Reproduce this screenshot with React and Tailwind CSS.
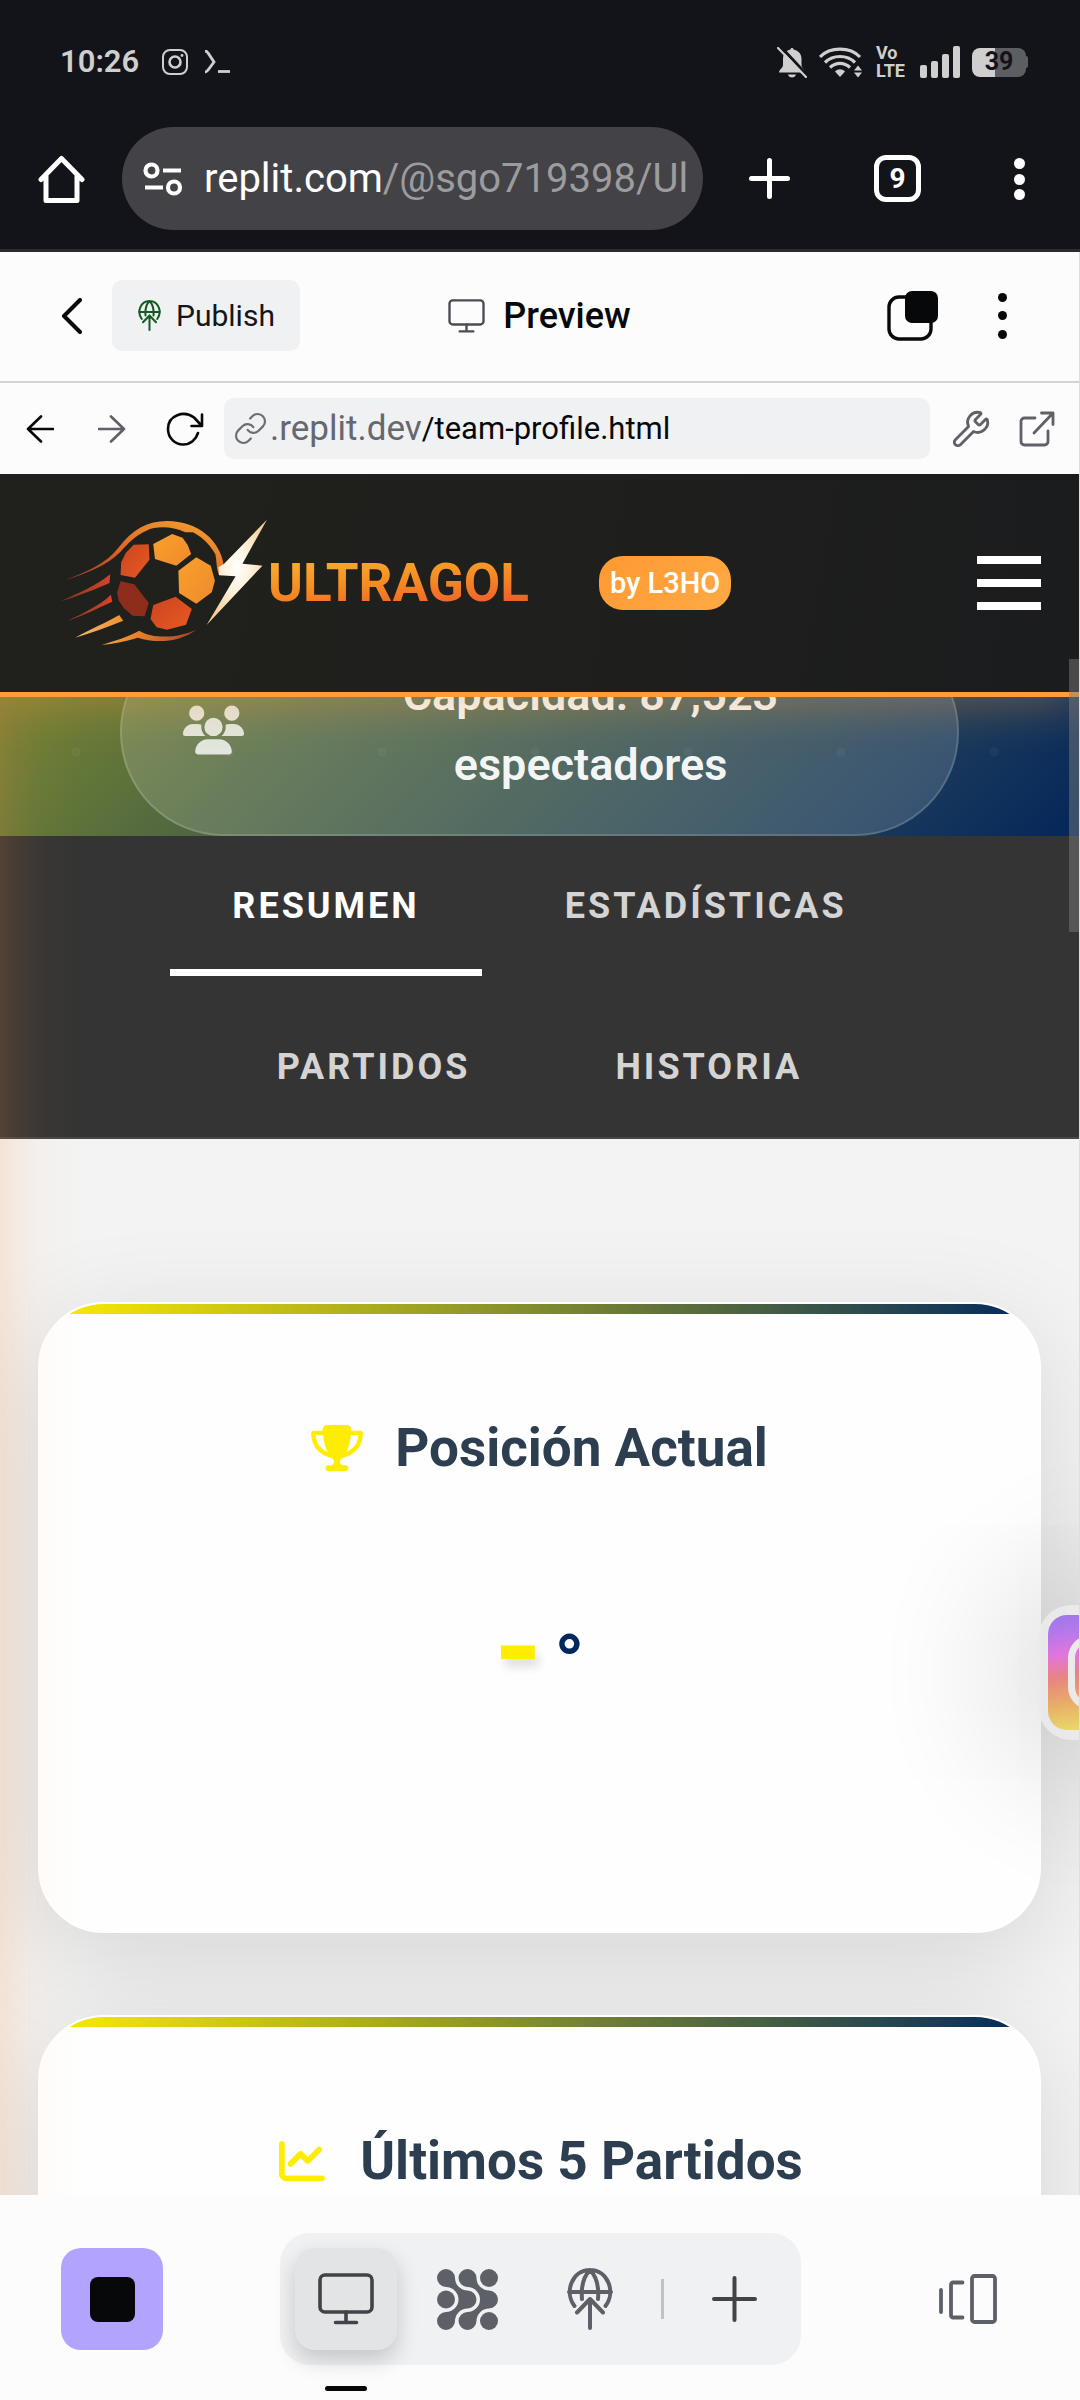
import React from "react";
import { Wrench, Link } from "lucide-react";
import { FaUsers, FaTrophy, FaChartLine } from "react-icons/fa6";

function StatusBar() {
  return (
    <div className="flex h-[124px] items-center justify-between pl-[60px] pr-[52px] text-[#cfcfcf]">
      <div className="flex items-center">
        <span className="text-[31px] leading-10 font-semibold">10:26</span>
        <svg className="ml-[23px]" width="26" height="26" viewBox="0 0 26 26" fill="none" stroke="currentColor" aria-hidden="true">
          <rect x="1" y="1" width="24" height="24" rx="7" strokeWidth="2" />
          <circle cx="13" cy="13" r="5.5" strokeWidth="2.6" />
          <circle cx="20" cy="6.5" r="1.4" fill="currentColor" stroke="none" />
        </svg>
        <svg className="ml-4" width="26" height="24" viewBox="0 0 26 24" fill="none" stroke="currentColor" strokeWidth="2.8" aria-hidden="true">
          <path d="M1 1c2 0 2 1 3 2l6 9-6 8c-1 1-1 2-3 2" />
          <path d="M14 21.5h12" />
        </svg>
      </div>
      <div className="flex items-center">
        <svg width="30" height="31" viewBox="0 0 30 31" fill="currentColor" aria-hidden="true">
          <path d="M15 1c1 0 1.500.600 1.500 1.500C21.500 3.500 24.500 7 24.500 12v6c0 3 3.500 4.500 3.500 7.500H2c0-3 4-4.500 4-7.500v-6c0-5 3-8.500 7.500-9.500C13.500 1.600 14 1 15 1z" />
          <path d="M11 27.500h8c-.800 4-7.200 4-8 0z" />
          <path d="M3 -1L31 29" stroke="#131419" strokeWidth="3" />
          <path d="M1 1L29 30" stroke="currentColor" strokeWidth="2.200" strokeLinecap="round" />
        </svg>
        <svg className="ml-3" width="44" height="31" viewBox="0 0 44 31" fill="none" stroke="currentColor" strokeWidth="3.200" aria-hidden="true">
          <path d="M1 10C11-.5 31-.5 41 10" />
          <path d="M6 15.500c8-8 22-8 30 0" />
          <path d="M11 20.500c6-5.500 14-5.500 20 0" />
          <path d="M16 24.500c3-3 7-3 10 0L21 30z" fill="currentColor" stroke="none" />
          <path d="M35 23.500l4-5 4 5zM35 25.500h8l-4 5z" fill="currentColor" stroke="none" />
        </svg>
        <span className="ml-[13px] flex flex-col text-[18px] leading-[18px] font-bold">
          <span>Vo</span>
          <span>LTE</span>
        </span>
        <svg className="ml-[15px]" width="40" height="32" viewBox="0 0 40 32" fill="currentColor" aria-hidden="true">
          <rect x="0" y="19" width="7" height="13" rx="2" />
          <rect x="11" y="15" width="7" height="17" rx="2" />
          <rect x="22" y="8" width="7" height="24" rx="2" />
          <rect x="33" y="0" width="7" height="32" rx="2" />
        </svg>
        <span className="ml-3 flex h-[29px] w-[54px] items-center justify-center rounded-lg bg-[linear-gradient(90deg,#cfcfcf_42%,#5d5e61_42%)] text-[25px] leading-7 font-bold text-[#131419]">39</span>
        <span className="h-3 w-[2px] rounded-r bg-[#5d5e61]" />
      </div>
    </div>
  );
}

function BrowserBar() {
  return (
    <div className="flex h-[128px] items-start border-b-[3px] border-[#2a2a31] pt-[3px] pl-[38px] pr-[55px] text-white">
      <button aria-label="Inicio" className="mt-7">
        <svg width="47" height="48" viewBox="0 0 47 48" fill="none" stroke="currentColor" strokeWidth="5" strokeLinejoin="round" strokeLinecap="round" aria-hidden="true">
          <path d="M3 24.500L23.500 3.500 44 24.500M8 21v24.500h31V21" />
        </svg>
      </button>
      <button className="ml-[37px] flex h-[103px] min-w-0 flex-1 items-center rounded-full bg-[#424247] pl-[21px]">
        <svg className="shrink-0" width="40" height="34" viewBox="0 0 40 34" fill="none" stroke="currentColor" strokeWidth="4.200" aria-hidden="true">
          <circle cx="8.500" cy="8.500" r="6" />
          <path d="M20 8.500h18M2 25.500h18" />
          <circle cx="31" cy="25.500" r="6" />
        </svg>
        <span className="ml-[21px] min-w-0 flex-1 overflow-hidden text-left text-[40px] leading-[56px] whitespace-nowrap">
          replit.com<span className="text-[#9c9c9f]">/@sgo719398/Ul</span>
        </span>
      </button>
      <button aria-label="Nueva pestaña" className="mt-[31px] ml-[46px]">
        <svg width="41" height="41" viewBox="0 0 41 41" stroke="currentColor" strokeWidth="5" strokeLinecap="round" aria-hidden="true">
          <path d="M20.500 2.500v36M2.500 20.500h36" />
        </svg>
      </button>
      <button aria-label="9 pestañas" className="mt-[28px] ml-[84px] flex h-[47px] w-[47px] items-center justify-center rounded-xl border-[5px] border-white text-[28px] leading-8 font-bold">
        9
      </button>
      <button aria-label="Menú del navegador" className="mt-[31px] ml-[93px] flex h-[42px] w-[11px] flex-col justify-between">
        <span className="h-[11px] w-[11px] rounded-full bg-white" />
        <span className="h-[11px] w-[11px] rounded-full bg-white" />
        <span className="h-[11px] w-[11px] rounded-full bg-white" />
      </button>
    </div>
  );
}

function MonitorIcon({ className }) {
  return (
    <svg className={className} viewBox="0 0 56 52" fill="none" stroke="currentColor" strokeWidth="3.600" strokeLinecap="round" strokeLinejoin="round" aria-hidden="true">
      <rect x="2" y="2" width="52" height="37" rx="5" />
      <path d="M28 39v10M17.500 49.500h21" />
    </svg>
  );
}

function PublishIcon({ className, strokeWidth }) {
  return (
    <svg className={className} viewBox="0 0 46 62" fill="none" stroke="currentColor" strokeWidth={strokeWidth} strokeLinecap="round" strokeLinejoin="round" aria-hidden="true">
      <path d="M7.500 38C-3 24 5 2 23 2s26 22 15.500 36M2 24h42M23 2c-7 7-9 17-8 29M23 2c7 7 9 17 8 29M23 60V31M10 44.500l13-13.500 13 13.500" />
    </svg>
  );
}

function WorkspaceBar() {
  return (
    <div className="grid h-[131px] shrink-0 grid-cols-[1fr_auto_1fr] items-center border-b-2 border-[#d3d3d4] pb-[2px] text-[#07080a]">
      <div className="flex items-center pl-[61px]">
        <button aria-label="Atrás">
          <svg width="21" height="36" viewBox="0 0 21 36" fill="none" stroke="currentColor" strokeWidth="4" strokeLinecap="round" strokeLinejoin="round" aria-hidden="true">
            <path d="M19 2L3 18l16 16" />
          </svg>
        </button>
        <button className="ml-[30px] flex h-[71px] items-center rounded-[10px] bg-[#eff1f3] pr-[25px] pl-[26px] text-[30px] leading-10 text-[#14161a]">
          <PublishIcon className="mr-[15px] h-[31px] w-[23px] text-[#135b22]" strokeWidth="4" />
          Publish
        </button>
      </div>
      <div className="flex items-center">
        <MonitorIcon className="mr-[18px] h-[34px] w-[37px] text-[#4b4c53]" />
        <h1 className="text-[36px] leading-10 font-medium">Preview</h1>
      </div>
      <div className="flex items-center justify-end pr-[72px]">
        <button aria-label="Ventanas">
          <svg width="52" height="52" viewBox="0 0 52 52" aria-hidden="true">
            <rect x="2" y="7" width="42" height="42" rx="10" fill="none" stroke="currentColor" strokeWidth="3.400" />
            <rect x="18" y="1" width="33" height="32" rx="7" fill="currentColor" />
          </svg>
        </button>
        <button aria-label="Más opciones" className="ml-[59px] flex h-[46px] w-[9px] flex-col justify-between">
          <span className="h-[9px] w-[9px] rounded-full bg-[#07080a]" />
          <span className="h-[9px] w-[9px] rounded-full bg-[#07080a]" />
          <span className="h-[9px] w-[9px] rounded-full bg-[#07080a]" />
        </button>
      </div>
    </div>
  );
}

function AddressBar() {
  return (
    <div className="flex h-[91px] shrink-0 items-center pl-[26px] pr-6 text-[#07080a]">
      <button aria-label="Página anterior">
        <svg width="28" height="28" viewBox="0 0 28 28" fill="none" stroke="currentColor" strokeWidth="2.600" strokeLinecap="round" strokeLinejoin="round" aria-hidden="true">
          <path d="M27 14H2M15 1.500L2 14l13 12.500" />
        </svg>
      </button>
      <button aria-label="Página siguiente" className="ml-[44px] text-[#5f6068]">
        <svg width="28" height="28" viewBox="0 0 28 28" fill="none" stroke="currentColor" strokeWidth="2.600" strokeLinecap="round" strokeLinejoin="round" aria-hidden="true">
          <path d="M1 14h25M13 1.500L26 14 13 26.500" />
        </svg>
      </button>
      <button aria-label="Recargar" className="ml-10">
        <svg width="38" height="34" viewBox="0 0 38 34" fill="none" stroke="currentColor" strokeWidth="2.600" strokeLinecap="round" strokeLinejoin="round" aria-hidden="true">
          <path d="M36 2.500v11.500H25.500M35 13L28 5.500C18-2 2 3 2 17c0 9 7 15.500 15 15.500 7.500 0 13-5 15-11.500" />
        </svg>
      </button>
      <div className="ml-5 flex h-[61px] min-w-0 flex-1 items-center rounded-[10px] bg-[#eff1f3] pl-[9px]">
        <Link size={35} strokeWidth={1.5} color="#6b6c74" aria-hidden="true" />
        <span className="ml-[2px] text-[35px] leading-10 text-[#66676f]">.replit.dev</span>
        <input aria-label="Ruta" defaultValue="/team-profile.html" className="min-w-0 flex-1 bg-transparent text-[31px] leading-10 outline-none" />
      </div>
      <button aria-label="Herramientas" className="ml-[21px] text-[#5f6068]">
        <Wrench size={40} strokeWidth={1.7} />
      </button>
      <button aria-label="Abrir en otra pestaña" className="ml-7 text-[#5f6068]">
        <svg width="36" height="36" viewBox="0 0 36 36" fill="none" stroke="currentColor" strokeWidth="2.800" strokeLinecap="round" strokeLinejoin="round" aria-hidden="true">
          <path d="M16 7H5.500C3.500 7 2 8.500 2 10.500v20C2 32.500 3.500 34 5.500 34h20c2 0 3.500-1.500 3.500-3.500V20M22.500 2H34v11.500M34 2L15 22" />
        </svg>
      </button>
    </div>
  );
}

function Logo() {
  return (
    <a href="#inicio" className="flex items-center">
      <svg width="208" height="128" viewBox="60 50 208 128" aria-hidden="true">
        <defs>
          <linearGradient id="arc" x1="0" y1="1" x2="1" y2="0">
            <stop offset="0" stopColor="#8a3a20" />
            <stop offset="0.450" stopColor="#e0682a" />
            <stop offset="1" stopColor="#f6a52c" />
          </linearGradient>
          <linearGradient id="streak" x1="0" y1="0" x2="1" y2="0">
            <stop offset="0" stopColor="#7a3a22" />
            <stop offset="1" stopColor="#d8422a" />
          </linearGradient>
          <linearGradient id="flame" x1="0" y1="0" x2="1" y2="0">
            <stop offset="0" stopColor="#f6b968" />
            <stop offset="0.450" stopColor="#ee8a2c" />
            <stop offset="1" stopColor="#a3412a" />
          </linearGradient>
          <linearGradient id="red" x1="0" y1="0" x2="1" y2="1">
            <stop offset="0" stopColor="#c8441f" />
            <stop offset="1" stopColor="#ea5a22" />
          </linearGradient>
          <linearGradient id="amber" x1="0" y1="0" x2="1" y2="1">
            <stop offset="0" stopColor="#f9a02c" />
            <stop offset="1" stopColor="#f08a2c" />
          </linearGradient>
          <radialGradient id="bolt" cx="0.500" cy="0.450" r="0.550">
            <stop offset="0" stopColor="#ffffff" />
            <stop offset="0.450" stopColor="#fdf0d8" />
            <stop offset="1" stopColor="#f5cf98" />
          </radialGradient>
        </defs>
        <g transform="scale(0.3444 0.3333)">
          <path fill="url(#arc)" d="M188 334C260 305 310 282 345 235C385 180 430 156 485 156C575 156 640 215 650 290L636 318C627 295 630 275 625 255C605 220 580 200 560 190L538 190C500 172 455 170 425 185C392 200 370 225 350 248C310 290 250 314 188 334Z" />
          <path fill="url(#streak)" d="M175 397C230 372 280 350 320 316L318 342C280 360 230 380 175 397ZM196 456C240 432 290 410 322 377L326 398C280 420 240 440 196 456Z" />
          <path fill="url(#flame)" d="M218 506C265 480 305 462 346 438L358 455C310 475 265 492 218 506ZM295 528C340 512 370 505 404 485C450 512 520 506 570 482C520 520 455 524 400 506C360 518 330 524 295 528Z" />
          <path fill="url(#red)" d="M388 227L432 226L434 272L392 326L350 318L352 280L365 252Z" />
          <path fill="url(#amber)" d="M445 225L500 195L530 206L545 228L555 255L512 290L450 270Z" />
          <path fill="url(#amber)" d="M518 305L570 265L612 290L624 335L615 370L570 404L520 372Z" />
          <path fill="#8f2d1c" d="M350 337L390 346L432 402L420 442L385 440L360 418L345 395L340 370Z" />
          <path fill="url(#red)" d="M445 408L510 383L557 420L540 467L485 482L455 475L437 450Z" />
          <path fill="url(#bolt)" d="M775 152L704 284L762 290L600 468L684 322L636 319L634 295L650 285Z" />
        </g>
      </svg>
      <span className="bg-[linear-gradient(175deg,#f7a82b_20%,#f58a22_50%,#f0622a_80%)] bg-clip-text text-[53px] leading-[64px] font-bold text-transparent">ULTRAGOL</span>
    </a>
  );
}

function SiteHeader() {
  return (
    <header className="relative z-10 flex shrink-0 items-center justify-between border-b-[5px] border-[#ff9c37] bg-[linear-gradient(100deg,#20211c,#1f1f1d_50%,#1b1c1e)] py-[45px] pr-[38px] pl-[60px] shadow-[0_6px_45px_rgba(255,153,51,0.35)]">
      <Logo />
      <span className="mr-auto ml-[70px] rounded-3xl bg-[linear-gradient(135deg,#ff9933,#ffaa44)] px-[11px] py-[7px] text-[29px] leading-10 font-medium text-white">by L3HO</span>
      <button aria-label="Menú" className="flex w-16 flex-col gap-[15px]">
        <span className="h-2 bg-white" />
        <span className="h-2 bg-white" />
        <span className="h-2 bg-white" />
      </button>
    </header>
  );
}

function Hero() {
  return (
    <section className="flex h-[139px] shrink-0 flex-col justify-end overflow-hidden bg-[radial-gradient(circle_at_76px_55px,rgba(255,255,255,0.04)_4px,transparent_5px),linear-gradient(135deg,#768036,#647838_12%,#52683f_25%,#345048_52%,#19395a_82%,#04265a)] bg-[size:153px_100%,100%_100%] px-[120px]">
      <div className="flex shrink-0 items-center rounded-[104px] border-2 border-white/15 bg-white/15 pt-[30px] pr-[62px] pb-[34px] pl-[61px] text-white/95">
        <FaUsers className="h-[50px] w-[61px] shrink-0 text-white/80" aria-hidden="true" />
        <p className="min-w-0 flex-1 pr-[38px] pl-[80px] text-center text-[45px] leading-[70px] font-semibold">
          Capacidad: 87,523 espectadores
        </p>
      </div>
    </section>
  );
}

const tabs = ["RESUMEN", "ESTADÍSTICAS", "PARTIDOS", "HISTORIA"];

function Tabs() {
  return (
    <nav className="flex shrink-0 flex-wrap justify-center gap-[21px] border-b-2 border-[#484646] bg-[#343434] px-[110px]">
      {tabs.map((tab, index) => (
        <button
          key={tab}
          className={
            index === 0
              ? "border-b-[7px] border-white px-[62px] pt-10 pb-[33px] text-[36px] leading-[60px] font-bold tracking-[3px] text-white"
              : "px-[62px] py-10 text-[36px] leading-[60px] font-bold tracking-[3px] text-[#d4d4d4]"
          }
        >
          {tab}
        </button>
      ))}
    </nav>
  );
}

function Card({ icon: Icon, title, children }) {
  return (
    <article className="h-[631px] shrink-0 overflow-hidden rounded-[66px] border-2 border-white bg-[#fefefe] shadow-[0_27px_110px_rgba(0,0,0,0.12)]">
      <div className="h-[10px] bg-[linear-gradient(90deg,#ffed00,#00285e)]" />
      <h2 className="mt-[92px] flex items-center justify-center gap-[32px] text-[53px] leading-[84px] font-bold text-[#2c3e50]">
        <Icon className="h-[46px] w-[52px] text-[#ffed00]" aria-hidden="true" />
        {title}
      </h2>
      {children}
    </article>
  );
}

function InstagramBubble() {
  return (
    <a href="#instagram" aria-label="Instagram" className="absolute top-[1131px] -right-[90px] flex h-[135px] w-[131px] items-center rounded-[34px] bg-[#eaeaea] pl-[10px] opacity-95 shadow-[0_0_170px_10px_rgba(0,0,0,0.25)]">
      <svg width="115" height="115" viewBox="0 0 115 115" aria-hidden="true">
        <defs>
          <linearGradient id="insta" x1="0" y1="0" x2="0.150" y2="1">
            <stop offset="0" stopColor="#9a72ee" />
            <stop offset="0.180" stopColor="#b573ea" />
            <stop offset="0.360" stopColor="#e36fdc" />
            <stop offset="0.550" stopColor="#e8807c" />
            <stop offset="0.780" stopColor="#e8ac62" />
            <stop offset="1" stopColor="#e9d565" />
          </linearGradient>
        </defs>
        <rect width="115" height="115" rx="19" fill="url(#insta)" />
        <rect x="23.500" y="24" width="68" height="67" rx="19" fill="none" stroke="#eaeaea" strokeWidth="7" />
        <circle cx="57.500" cy="57.500" r="15" fill="none" stroke="#eaeaea" strokeWidth="7" />
      </svg>
    </a>
  );
}

function Preview() {
  return (
    <main className="relative flex min-h-0 flex-1 flex-col overflow-hidden bg-[#f3f3f3]">
      <SiteHeader />
      <Hero />
      <Tabs />
      <div className="flex flex-col gap-[82px] px-[38px] pt-[163px]">
        <Card icon={FaTrophy} title="Posición Actual">
          <p className="mt-[79px] flex items-baseline justify-center gap-[12px] font-bold">
            <span className="text-[122px] leading-[160px] text-[#ffed00] [text-shadow:4px_8px_10px_rgba(0,0,0,0.12)]">-</span>
            <span className="text-[78px] leading-[80px] text-[#00285e]">°</span>
          </p>
        </Card>
        <Card icon={FaChartLine} title="Últimos 5 Partidos" />
      </div>
      <div className="pointer-events-none absolute top-[150px] bottom-0 left-0 w-20 bg-[linear-gradient(90deg,rgba(255,145,60,0.16),rgba(255,150,60,0.09)_20%,rgba(255,170,60,0.03)_50%,transparent)] [mask-image:linear-gradient(transparent,black_70px)]" />
      <InstagramBubble />
      <div className="absolute top-[185px] right-0 z-20 h-[273px] w-[10px] bg-[#808080]/45" />
    </main>
  );
}

function BlocksIcon() {
  const chain =
    "M9 18A12.500 12.500 0 0 1 9 43A9 9 0 1 0 18 52A12.500 12.500 0 0 1 30.500 39.500A9 9 0 0 0 30.500 21.500A12.500 12.500 0 0 1 18 9A9 9 0 1 0 9 18Z";
  return (
    <svg width="61" height="61" viewBox="0 0 61 61" fill="currentColor" aria-hidden="true">
      <path d={chain} />
      <path d={chain} transform="translate(21.500 0)" />
      <circle cx="9" cy="30.500" r="9" />
      <circle cx="52" cy="9" r="9" />
      <circle cx="52" cy="52" r="9" />
    </svg>
  );
}

function BottomBar() {
  return (
    <footer className="grid h-[205px] shrink-0 grid-cols-[1fr_auto_1fr] items-start pt-[38px] text-[#5e6068]">
      <button aria-label="Detener" className="mt-[15px] ml-[61px] flex h-[102px] w-[102px] items-center justify-center rounded-[20px] bg-[#b2a3ff]">
        <span className="h-[45px] w-[45px] rounded-lg bg-[#07080a]" />
      </button>
      <div className="flex items-center gap-5 rounded-[30px] bg-[#eff1f3] p-[15px]">
        <button aria-label="Preview" className="relative flex h-[102px] w-[102px] items-center justify-center rounded-[20px] bg-[#e3e4e6] text-[#424349] shadow-[0_10px_22px_rgba(0,0,0,0.18)]">
          <MonitorIcon className="h-[52px] w-[56px]" />
          <span className="absolute -bottom-[41px] h-[5px] w-[42px] rounded-full bg-[#07080a]" />
        </button>
        <button aria-label="Aplicaciones" className="flex h-[102px] w-[102px] items-center justify-center">
          <BlocksIcon />
        </button>
        <button aria-label="Publish" className="flex h-[102px] w-[102px] items-center justify-center">
          <PublishIcon className="h-[62px] w-[46px]" strokeWidth="4" />
        </button>
        <span className="h-10 w-[3px] bg-[#c1c2c5]" />
        <button aria-label="Añadir" className="flex h-[102px] w-[102px] items-center justify-center text-[#424349]">
          <svg width="45" height="46" viewBox="0 0 45 46" stroke="currentColor" strokeWidth="4" strokeLinecap="round" aria-hidden="true">
            <path d="M22.500 2v42M2 23h41" />
          </svg>
        </button>
      </div>
      <button aria-label="Paneles" className="mt-10 mr-[83px] justify-self-end">
        <svg width="58" height="52" viewBox="0 0 58 52" fill="none" stroke="currentColor" strokeWidth="3.800" strokeLinecap="round" strokeLinejoin="round" aria-hidden="true">
          <path d="M2 17v22M23.500 9.500H14c-1 0-2 1-2 2v31c0 1 1 2 2 2h9.500" />
          <rect x="33" y="3" width="23" height="46" rx="2.500" />
        </svg>
      </button>
    </footer>
  );
}

export default function App() {
  return (
    <div className="flex h-screen flex-col bg-[#fcfcfc] font-[Roboto,sans-serif]">
      <div className="shrink-0 bg-[#131419]">
        <StatusBar />
        <BrowserBar />
      </div>
      <div className="flex min-h-0 flex-1 flex-col border-r border-[#dedede]">
        <WorkspaceBar />
        <AddressBar />
        <Preview />
      </div>
      <BottomBar />
    </div>
  );
}
